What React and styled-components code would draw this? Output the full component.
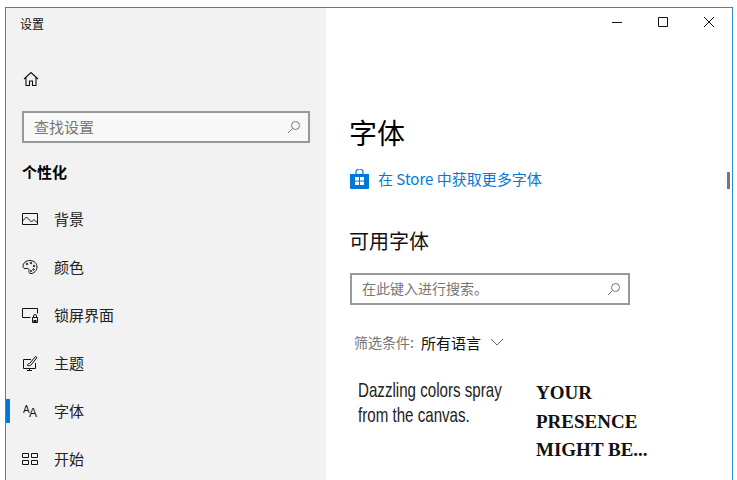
import React from 'react';
import styled, { createGlobalStyle } from 'styled-components';

const CJK = '"Noto Sans CJK SC", "Noto Sans", sans-serif';

const Global = createGlobalStyle`
  html, body { margin: 0; padding: 0; background: #fff; overflow: hidden; }
  * { box-sizing: border-box; }
  body { font-family: ${CJK}; }
`;

const Win = styled.div`
  position: relative;
  display: flex;
  width: 728px;
  height: 473px;
  margin: 7px 0 0 5px;
  border: 1px solid #2b88d8;
  border-bottom: none;
  overflow: hidden;
`;

const Side = styled.aside`
  width: 320px;
  flex-shrink: 0;
  background: #f2f2f2;
  display: flex;
  flex-direction: column;
  & > * { flex-shrink: 0; }
`;

const AppTitle = styled.div`
  font-size: 12px;
  line-height: 16px;
  color: #111;
  padding: 8px 0 0 14px;
`;

const HomeBtn = styled.div`
  display: flex;
  margin: 38px 0 0 17px;
  height: 18px;
  align-items: center;
`;

const Search = styled.div`
  display: flex;
  flex-shrink: 0;
  align-items: center;
  justify-content: space-between;
  border: 2px solid #999;
  background: ${p => p.$bg || '#fff'};
  width: ${p => p.$w}px;
  height: 32px;
  padding: 0 7px 0 10px;
  margin: ${p => p.$m};
  font-size: ${p => p.$fs}px;
  color: #767676;
`;

const Nudge = styled.span`
  padding-bottom: 2px;
`;

const GroupTitle = styled.div`
  font-size: 15px;
  font-weight: 700;
  line-height: 20px;
  color: #000;
  margin: 19px 0 0 16px;
`;

const NavList = styled.nav`
  display: flex;
  flex-direction: column;
  margin-top: 13px;
`;

const NavItem = styled.div`
  position: relative;
  display: flex;
  align-items: center;
  height: 48px;
  flex-shrink: 0;
  padding-left: 16px;
  font-size: 15px;
  color: #222;
  ${p => p.$active && `
    &::before {
      content: '';
      position: absolute;
      left: 0;
      top: 12px;
      width: 4px;
      height: 24px;
      background: #0078d7;
    }
  `}
`;

const NavIcon = styled.span`
  display: flex;
  width: 32px;
  flex-shrink: 0;
`;

const Main = styled.main`
  flex: 1;
  background: #fff;
  display: flex;
  flex-direction: column;
  padding-left: 24px;
  & > * { flex-shrink: 0; }
`;

const Controls = styled.div`
  display: flex;
  justify-content: flex-end;
  align-items: center;
  gap: 34px;
  height: 20px;
  margin-top: 4px;
  padding-right: 17px;
`;

const Heading = styled.h1`
  font-size: 28px;
  font-weight: 400;
  line-height: 38px;
  color: #000;
  margin: 81px 0 0 -1px;
`;

const StoreLink = styled.a`
  display: flex;
  align-items: center;
  gap: 9px;
  margin-top: 18px;
  font-size: 15px;
  line-height: 20px;
  color: #0a78d2;
`;

const Sub = styled.h2`
  font-size: 20px;
  font-weight: 400;
  line-height: 28px;
  color: #111;
  margin: 38px 0 0 -1px;
`;

const Filter = styled.div`
  display: flex;
  align-items: center;
  margin: 26px 0 0 4px;
  height: 22px;
  font-size: 14px;
  color: #767676;
`;

const FilterValue = styled.span`
  color: #111;
  font-size: 15px;
  margin: 0 9px 0 7px;
`;

const Previews = styled.div`
  display: flex;
  margin: 24px 0 0 8px;
`;

const NarrowBox = styled.div`
  width: 178px;
  flex-shrink: 0;
`;

const Narrow = styled.div`
  font-family: "Liberation Sans", sans-serif;
  font-size: 21px;
  line-height: 25px;
  white-space: nowrap;
  color: #222;
  transform: scaleX(0.72);
  transform-origin: left top;
`;

const Gothic = styled.div`
  font-family: "Liberation Serif", serif;
  font-weight: 700;
  font-size: 19px;
  line-height: 28.5px;
  white-space: nowrap;
  color: #111;
  margin-top: 2px;
`;

const Thumb = styled.div`
  position: absolute;
  right: 2px;
  top: 164px;
  width: 3px;
  height: 17px;
  background: #777;
`;

const Glass = () => (
  <svg width="14" height="14" viewBox="0 0 14 14" fill="none" stroke="#777" strokeWidth="1">
    <circle cx="8.5" cy="5.5" r="4" />
    <path d="M5.5 8.5L1 13" />
  </svg>
);

const Ico = ({ children }) => (
  <svg width="16" height="16" viewBox="0 0 16 16" fill="none" stroke="#111" strokeWidth="1">
    {children}
  </svg>
);

const items = [
  ['背景', <Ico><path d="M.5 2.5h15v11H.5z" /><path d="M.5 10l4-4 5 5 2.5-2.5 3.5 3.5" /></Ico>],
  ['颜色', <Ico><path d="M8 1.5c4 0 7 3 7 6.5s-3 6.5-6 6.5c-2 0-2.500-1.500-2-3 .4-1.500-1-2.500-3-2-1.500.4-3-.3-3-2C1 4 4 1.500 8 1.500z" /><circle cx="5" cy="5" r=".8" /><circle cx="9" cy="4" r=".8" /><circle cx="12" cy="7" r=".8" /><circle cx="11.500" cy="10.500" r=".8" /><circle cx="9" cy="12" r=".6" /></Ico>],
  ['锁屏界面', <Ico><path d="M8.500 10.500H.5v-9h15v5" /><path d="M10.500 10.500h5v5h-5z" /><path d="M11.500 13h3v2h-3z" fill="#111" stroke="none" /><path d="M11.500 10.500V9a1.500 1.500 0 0 1 3 0v1.500" /></Ico>],
  ['主题', <Ico><path d="M9 4.500H1.500v9h12V8" /><path d="M5 15.500h5M7.500 13.500v2" /><path d="M5.500 10.500c0-1.500 1-2 2-2l6-7 1.500 1-6 7.500c-1 1-2.500 .8-3.500 .5z" /></Ico>],
  ['字体', <svg width="16" height="16" viewBox="0 0 16 16"><text x="1" y="10" fontFamily='"Liberation Sans", sans-serif' fontSize="10" fill="#111">A</text><text x="7" y="14" fontFamily='"Liberation Sans", sans-serif' fontSize="12" fill="#111">A</text></svg>],
  ['开始', <Ico><path d="M.5 2.500h6v4h-6zM9.500 2.500h6v4h-6zM.5 9.500h6v4h-6zM9.500 9.500h6v4h-6z" /></Ico>],
];

export default function App() {
  return (
    <>
      <Global />
      <Win>
        <Side>
          <AppTitle>设置</AppTitle>
          <HomeBtn>
            <svg width="16" height="16" viewBox="0 0 16 16" fill="none" stroke="#111" strokeWidth="1.1">
              <path d="M1 8l7-6.500L15 8M3 6.500v8h3.500V10h3v4.500H13v-8" />
            </svg>
          </HomeBtn>
          <Search $w={288} $m="23px 0 0 16px" $fs={15} $bg="#f8f8f8">
            <Nudge>查找设置</Nudge>
            <Glass />
          </Search>
          <GroupTitle>个性化</GroupTitle>
          <NavList>
            {items.map(([label, icon]) => (
              <NavItem key={label} $active={label === '字体'}>
                <NavIcon>{icon}</NavIcon>
                <Nudge>{label}</Nudge>
              </NavItem>
            ))}
          </NavList>
        </Side>
        <Main>
          <Controls>
            <svg width="12" height="12" viewBox="0 0 12 12" stroke="#111"><path d="M1 6.500h10" /></svg>
            <svg width="12" height="12" viewBox="0 0 12 12" fill="none" stroke="#111"><path d="M1.500 1.500h9v9h-9z" /></svg>
            <svg width="12" height="12" viewBox="0 0 12 12" stroke="#111"><path d="M1 1l10 10M11 1L1 11" /></svg>
          </Controls>
          <Heading>字体</Heading>
          <StoreLink>
            <svg width="19" height="20" viewBox="0 0 19 20">
              <path d="M6 5V3.500a3.500 3.500 0 0 1 7 0V5" fill="none" stroke="#0078d7" strokeWidth="1.200" />
              <path d="M0 5h19v14a1 1 0 0 1-1 1H1a1 1 0 0 1-1-1z" fill="#0078d7" />
              <path d="M5 8h4v3.500H5zM10 8h4v3.500h-4zM5 12.500h4V16H5zM10 12.500h4V16h-4z" fill="#fff" />
            </svg>
            在 Store 中获取更多字体
          </StoreLink>
          <Sub>可用字体</Sub>
          <Search $w={280} $m="18px 0 0 0" $fs={14}>
            <Nudge>在此键入进行搜索。</Nudge>
            <Glass />
          </Search>
          <Filter>
            筛选条件:
            <FilterValue>所有语言</FilterValue>
            <svg width="14" height="8" viewBox="0 0 14 8" fill="none" stroke="#666"><path d="M1 1l6 6 6-6" /></svg>
          </Filter>
          <Previews>
            <NarrowBox>
              <Narrow>Dazzling colors spray<br />from the canvas.</Narrow>
            </NarrowBox>
            <Gothic>YOUR<br />PRESENCE<br />MIGHT BE...</Gothic>
          </Previews>
        </Main>
        <Thumb />
      </Win>
    </>
  );
}
